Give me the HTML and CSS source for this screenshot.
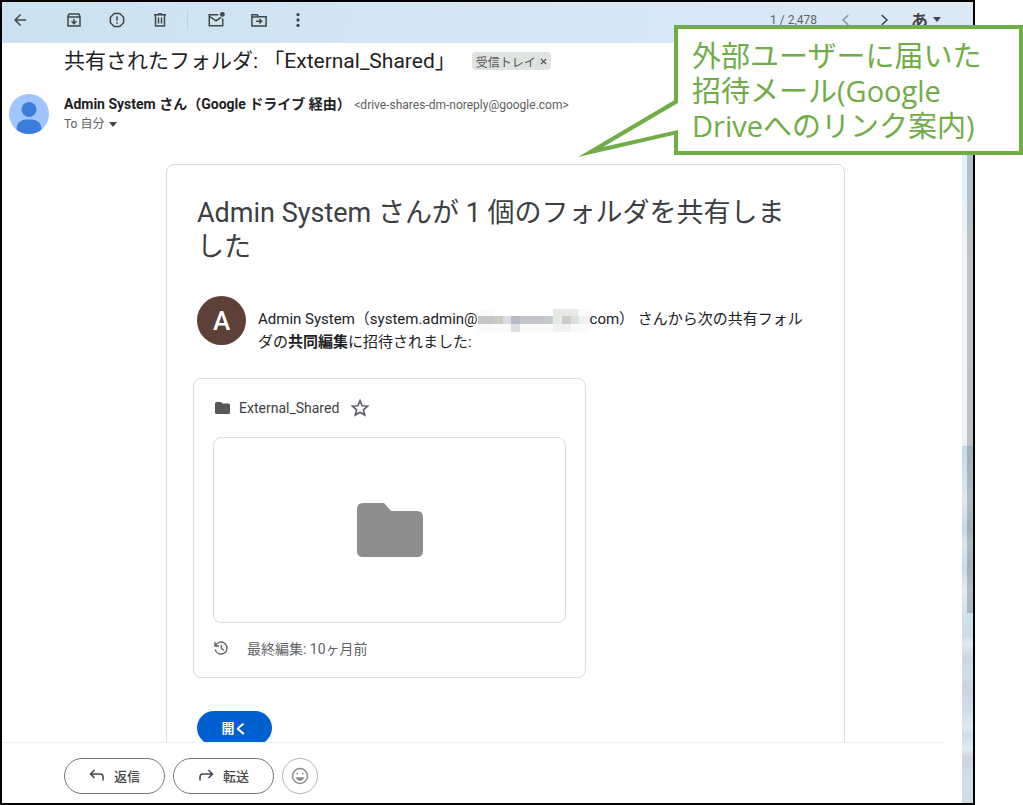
FILE: index.html
```
<!DOCTYPE html>
<html lang="ja">
<head>
    <meta charset="UTF-8">
    <meta name="viewport" content="width=device-width, initial-scale=1.0">
    <title>共有されたフォルダ</title>
    <link rel="stylesheet" href="styles.css">
</head>
<body>
    <div class="window">
        <header class="toolbar">
            <button class="tool back" aria-label="戻る">
                <svg viewBox="0 0 24 24"><path d="M20 11H7.8l5.6-5.6L12 4l-8 8 8 8 1.4-1.4L7.8 13H20z"/></svg>
            </button>
            <button class="tool" aria-label="アーカイブ">
                <svg viewBox="0 0 24 24"><path class="line" d="M4 7.2 5.5 4h13L20 7.2V20H4zM4 8h16M12 10.5v6M8.8 13.6l3.2 3.2 3.2-3.2"/></svg>
            </button>
            <button class="tool" aria-label="迷惑メールを報告">
                <svg viewBox="0 0 24 24"><path class="line" d="M8.3 3.2h7.4l5.1 5.1v7.4l-5.1 5.1H8.3l-5.1-5.1V8.3zM12 7v6M12 15v2"/></svg>
            </button>
            <button class="tool" aria-label="削除">
                <svg viewBox="0 0 24 24"><path class="line" d="M4 5h16M9 4h6M6 5v15h12V5M10 8.5v8M14 8.5v8"/></svg>
            </button>
            <span class="divider"></span>
            <button class="tool" aria-label="未読にする">
                <svg viewBox="0 0 24 24"><path class="line" d="M15 5H3v14.5h18V10M3 7l9 6 7-4.5"/><circle cx="20.5" cy="4.5" r="3.2"/></svg>
            </button>
            <button class="tool" aria-label="移動">
                <svg viewBox="0 0 24 24"><path class="line" d="M2.5 5h7l2 2.5h10V20h-19zM2.5 8h9M8 13.7h7M12.5 10.7l3 3-3 3"/></svg>
            </button>
            <button class="tool more" aria-label="その他">
                <svg viewBox="0 0 24 24"><circle cx="12" cy="4.7" r="2.2"/><circle cx="12" cy="12" r="2.2"/><circle cx="12" cy="19.3" r="2.2"/></svg>
            </button>
            <div class="pager">
                <span class="count">1 / 2,478</span>
                <button class="tool page newer" aria-label="前">
                    <svg viewBox="0 0 24 24"><path class="line" d="m15 5.5-7 6.5 7 6.5"/></svg>
                </button>
                <button class="tool page" aria-label="次">
                    <svg viewBox="0 0 24 24"><path class="line" d="m9 5.5 7 6.5-7 6.5"/></svg>
                </button>
                <button class="ime">あ<span class="caret"></span></button>
            </div>
        </header>

        <div class="content">
            <main class="mail">
                <div class="message">
                    <div class="subject">
                        <h1>共有されたフォルダ: 「External_Shared」</h1>
                        <button class="label">受信トレイ <svg viewBox="0 0 8 8"><path d="m1 1 6 6M7 1 1 7"/></svg></button>
                    </div>

                    <div class="sender">
                        <svg class="photo" viewBox="0 0 40 40">
                            <clipPath id="round"><circle cx="20" cy="20" r="20"/></clipPath>
                            <g clip-path="url(#round)">
                                <rect width="40" height="40" fill="#a0c5fc"/>
                                <circle cx="20" cy="15.5" r="7.5" fill="#3c7ddc"/>
                                <rect x="7.5" y="25.5" width="25" height="24" rx="9" fill="#3c7ddc"/>
                            </g>
                        </svg>
                        <div>
                            <div class="from"><b>Admin System さん（Google ドライブ 経由）</b> <span class="address">&lt;drive-shares-dm-noreply@google.com&gt;</span></div>
                            <button class="to">To 自分<span class="caret"></span></button>
                        </div>
                    </div>

                    <section class="card">
                        <h2>Admin System さんが 1 個のフォルダを共有しました</h2>
                        <div class="invite">
                            <span class="initial">A</span>
                            <p>Admin System（system.admin@<svg class="mosaic" viewBox="0 0 104 23" preserveAspectRatio="none" shape-rendering="crispEdges">
                                <rect width="104" height="23" fill="#fafafa"/>
                                <rect y="7" width="104" height="8" fill="#c4c5ca"/>
                                <rect x="15" y="7" width="8" height="8" fill="#cdcac0"/>
                                <rect x="23" y="7" width="8" height="8" fill="#dadde2"/>
                                <rect x="31" y="7" width="8" height="8" fill="#b9bac8"/>
                                <rect x="62" y="7" width="8" height="8" fill="#c4cccf"/>
                                <rect x="70" y="0" width="23" height="15" fill="#e8e8e6"/>
                                <rect x="78" y="7" width="8" height="8" fill="#d3cbc7"/>
                                <rect x="86" y="7" width="8" height="8" fill="#dce2e1"/>
                                <rect x="94" y="7" width="10" height="8" fill="#eff0f0"/>
                                <rect x="15" y="0" width="55" height="7" fill="#ffffff"/>
                                <rect x="31" y="15" width="8" height="8" fill="#dedfe3"/>
                                <rect x="70" y="15" width="16" height="8" fill="#f1f1f2"/>
                            </svg>com） さんから次の共有フォルダの<b>共同編集</b>に招待されました:</p>
                        </div>

                        <div class="file">
                            <div class="file-name">
                                <svg class="icon-folder" viewBox="0 0 15 12"><path d="M1.5 0H6l1.5 1.5h6Q15 1.5 15 3v7.5q0 1.5-1.5 1.5h-12Q0 12 0 10.5v-9Q0 0 1.5 0z"/></svg>
                                <a href="#">External_Shared</a>
                                <svg class="icon-star" viewBox="0 0 24 24"><path d="m12 3.2 2.5 6.1 6.6.5-5 4.3 1.5 6.4-5.6-3.4-5.6 3.4 1.5-6.4-5-4.3 6.6-.5z"/></svg>
                            </div>
                            <div class="preview">
                                <svg viewBox="0 0 66 54"><path d="M6 0h21l7 8h26q6 0 6 6v34q0 6-6 6H6q-6 0-6-6V6q0-6 6-6z"/></svg>
                            </div>
                            <div class="edited">
                                <svg viewBox="0 0 24 24"><path d="M3 3v6h6M3.6 8.8A9 9 0 1 1 3.2 14M12.5 7v5.5l4 3"/></svg>
                                <span>最終編集: 10ヶ月前</span>
                            </div>
                        </div>

                        <button class="open">開く</button>
                    </section>
                </div>

                <footer class="actions">
                    <button class="pill"><svg viewBox="0 0 16 14"><path d="m5.5 2-4 4 4 4M1.5 6H11q3 0 3 3v3.5"/></svg>返信</button>
                    <button class="pill"><svg viewBox="0 0 16 14"><path d="m10.5 2 4 4-4 4M14.5 6H5Q2 6 2 9v3.5"/></svg>転送</button>
                    <button class="pill emoji" aria-label="リアクション">
                        <svg viewBox="0 0 18 18"><circle cx="9" cy="9" r="7.5"/><path d="M6.3 5.8v1.6M11.7 5.8v1.6"/><path class="mouth" d="M4.8 10.2h8.4q-1 3.6-4.2 3.6t-4.2-3.6z"/></svg>
                    </button>
                </footer>
            </main>
            <div class="gutter"><div class="scrollbar"></div></div>
        </div>
    </div>

    <aside class="callout">
        <svg class="tail" viewBox="0 0 102 64"><path d="M102 1 2 60l100-23z"/><path class="fill" d="M102 6 27 50l75-17z"/></svg>
        外部ユーザーに届いた<br>招待メール(Google<br>Driveへのリンク案内)
    </aside>
</body>
</html>
```
FILE: styles.css
```
* {
    box-sizing: border-box;
}

body {
    margin: 0;
    background: #fff;
    color: #202124;
    font-family: Roboto, "Noto Sans CJK JP", sans-serif;
    font-size: 13px;
}

button {
    border: 0;
    padding: 0;
    background: none;
    color: inherit;
    font: inherit;
    cursor: pointer;
}

h1, h2, p {
    margin: 0;
    font-weight: 400;
}

.window {
    display: flex;
    flex-direction: column;
    height: 100vh;
    margin-right: 48px;
    border: 2px solid #000;
}

/* toolbar */
.toolbar {
    display: flex;
    align-items: center;
    flex: none;
    height: 41px;
    padding-bottom: 6px;
    background: linear-gradient(100deg, #cbe1ef, #d5e6f2 50%, #dceaf6);
    color: #444746;
}

.tool {
    display: flex;
    align-items: center;
    justify-content: center;
    width: 43px;
    height: 32px;
}

.tool svg {
    width: 18px;
    height: 18px;
    fill: currentColor;
}

.tool .line {
    fill: none;
    stroke: currentColor;
    stroke-width: 2;
}

.back {
    width: 36px;
    margin-right: 14px;
}

.more {
    width: 36px;
}

.divider {
    width: 1px;
    height: 20px;
    margin: 0 6px;
    background: #bdd3e2;
}

.pager {
    display: flex;
    align-items: center;
    margin-left: auto;
    padding-right: 32px;
}

.count {
    margin-right: 10px;
    font-size: 12px;
    color: #5f6368;
}

.page {
    width: 38px;
}

.newer {
    opacity: 0.5;
}

.ime {
    display: flex;
    align-items: center;
    margin-left: 8px;
    font-size: 17px;
    font-weight: 700;
}

.caret {
    display: inline-block;
    margin-left: 5px;
    border: 4px solid transparent;
    border-top: 5px solid #444746;
    border-bottom: 0;
}

/* mail */
.content {
    display: flex;
    flex: 1;
    min-height: 0;
}

.mail {
    display: flex;
    flex-direction: column;
    flex: 1;
    min-width: 0;
}

.message {
    flex: 1;
    min-height: 0;
    overflow: hidden;
    padding: 0 15px 0 62px;
}

.subject {
    display: flex;
    align-items: center;
    height: 36px;
}

.subject h1 {
    font-size: 21px;
    line-height: 36px;
    color: #1f1f1f;
}

.label {
    display: flex;
    align-items: center;
    height: 18px;
    margin-left: 16px;
    padding: 0 4px;
    border-radius: 4px;
    background: #dfe3df;
    color: #555;
    font-size: 12px;
}

.label svg {
    width: 7px;
    height: 7px;
    margin-left: 4px;
    fill: none;
    stroke: #444;
    stroke-width: 1.3;
}

.sender {
    display: flex;
    margin: 15px 0 30px -55px;
    line-height: 20px;
}

.photo {
    width: 40px;
    height: 40px;
    margin-right: 15px;
}

.from {
    font-size: 14px;
    height: 20px;
}

.address {
    color: #5e5e5e;
    font-size: 12px;
}

.to {
    display: flex;
    align-items: center;
    height: 20px;
    color: #5e5e5e;
    font-size: 12px;
}

.card {
    max-width: 679px;
    margin: 0 auto;
    padding: 31px 26px;
    border: 1px solid #dadce0;
    border-radius: 8px;
}

.card h2 {
    padding: 0 30px 0 4px;
    color: #3c4043;
    font-size: 27px;
    line-height: 34px;
}

.invite {
    display: flex;
    gap: 12px;
    margin: 32px 4px 24px;
}

.initial {
    flex: none;
    width: 49px;
    height: 49px;
    border-radius: 50%;
    background: #5d4037;
    color: #fff;
    font-size: 26px;
    font-weight: 500;
    line-height: 50px;
    text-align: center;
}

.invite p {
    padding-top: 12px;
    font-size: 15px;
    line-height: 23px;
}

.mosaic {
    width: 112px;
    height: 23px;
    margin: -4px 0;
    vertical-align: middle;
}

.file {
    max-width: 393px;
    padding: 19px;
    border: 1px solid #dadce0;
    border-radius: 8px;
}

.file-name {
    display: flex;
    align-items: center;
    height: 20px;
    margin-bottom: 19px;
    padding-left: 2px;
}

.file-name a {
    margin: 0 11px 0 9px;
    color: #3c4043;
    font-size: 14px;
    text-decoration: none;
}

.icon-folder {
    width: 15px;
    height: 12px;
    fill: #575757;
}

.icon-star {
    width: 20px;
    height: 20px;
    fill: none;
    stroke: #5f6368;
    stroke-width: 2;
}

.preview {
    display: flex;
    align-items: center;
    justify-content: center;
    height: 186px;
    border: 1px solid #dadce0;
    border-radius: 8px;
}

.preview svg {
    width: 66px;
    height: 54px;
    fill: #8e8e8e;
}

.edited {
    display: flex;
    align-items: center;
    gap: 18px;
    height: 20px;
    margin-top: 15px;
    color: #5f6368;
    font-size: 14px;
}

.edited svg {
    width: 16px;
    height: 16px;
    fill: none;
    stroke: #5f6368;
    stroke-width: 2;
}

.open {
    width: 75px;
    height: 34px;
    margin: 33px 4px 0;
    padding-bottom: 2px;
    border-radius: 17px;
    background: #0060d0;
    color: #fff;
    font-size: 13px;
    font-weight: 700;
}

.actions {
    display: flex;
    gap: 8px;
    flex: none;
    height: 61px;
    margin-right: 17px;
    padding: 15px 0 0 62px;
    border-top: 1px solid #eceff1;
}

.pill {
    display: flex;
    align-items: center;
    justify-content: center;
    gap: 9px;
    width: 101px;
    height: 36px;
    padding-bottom: 2px;
    border: 1px solid #747775;
    border-radius: 18px;
    color: #444746;
    font-size: 13px;
    font-weight: 500;
}

.pill svg {
    width: 16px;
    height: 14px;
    fill: none;
    stroke: currentColor;
    stroke-width: 1.5;
}

.emoji {
    width: 36px;
    padding-bottom: 0;
    border-color: #b4b6b5;
    color: #8c8e8d;
}

.emoji svg {
    width: 18px;
    height: 18px;
}

.emoji .mouth {
    fill: currentColor;
    stroke: none;
}

/* wallpaper strip on the right with the scrollbar */
.gutter {
    width: 11px;
    background: linear-gradient(#dfecf8, #e0f1f8 20%, #f1f5fa 30%, #eef3f9 53%, #c3dae6 53%, #d2e5ef 58%, #dfeaf3 60%, #c4dae7 64%, #d9e7f1 66%, #c6dce8 69%, #e2ebf4 72%, #cfe3ee 75%, #cbdce8 78%, #dfebf3 79%, #cdd6e3 81%, #cde0ea 83%, #cdd4e1 85%, #cde0ea 88%, #dfe9f2 90%, #cbdde8 91%, #dfecf3 93%, #cfd3e0 94%, #cde0ea 97%, #d0dbe7);
}

.scrollbar {
    height: 75%;
    margin-left: 5px;
    background: rgba(70, 70, 70, 0.28);
}

/* annotation */
.callout {
    position: absolute;
    top: 25px;
    right: 0;
    width: 349px;
    padding: 9px 14px 8px;
    border: 4px solid #70ad47;
    background: #fff;
    color: #70ad47;
    font-family: "Open Sans", "Noto Sans CJK JP", sans-serif;
    font-size: 29px;
    line-height: 35px;
    white-space: nowrap;
}

.tail {
    position: absolute;
    top: 68px;
    left: -102px;
    width: 102px;
    height: 64px;
    fill: #70ad47;
}

.tail .fill {
    fill: #fff;
}
```
